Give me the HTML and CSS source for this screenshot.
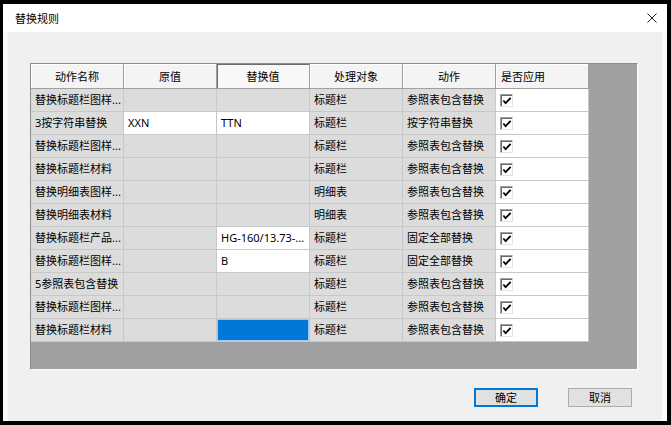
FILE: index.html
```html
<!DOCTYPE html>
<html lang="zh-CN">
  <head>
    <meta charset="UTF-8">
    <title>替换规则</title>
    <link rel="stylesheet" href="styles.css">
  </head>
  <body>
    <div class="window">
        <div class="titlebar">
            <span class="title">替换规则</span>
            <svg class="close" width="10" height="10" viewBox="0 0 10 10">
                <path d="M0.5 0.5 L9.5 9.5 M9.5 0.5 L0.5 9.5" stroke="#222" stroke-width="1" fill="none"/>
            </svg>
        </div>

        <div class="content">
            <div class="grid">
                <div class="row head">
                    <div class="th">动作名称</div>
                    <div class="th">原值</div>
                    <div class="th active">替换值</div>
                    <div class="th">处理对象</div>
                    <div class="th">动作</div>
                    <div class="th left">是否应用</div>
                </div>

                <div class="row">
                    <div class="cell">替换标题栏图样...</div>
                    <div class="cell"></div>
                    <div class="cell"></div>
                    <div class="cell">标题栏</div>
                    <div class="cell">参照表包含替换</div>
                    <div class="cell check"><span class="box"><svg width="11" height="11" viewBox="0 0 11 11"><path d="M1.5 5.5 L4 8.5 L9.5 2.5" stroke="#000" stroke-width="2" fill="none"/></svg></span></div>
                </div>
                <div class="row">
                    <div class="cell">3按字符串替换</div>
                    <div class="cell edit">XXN</div>
                    <div class="cell edit">TTN</div>
                    <div class="cell">标题栏</div>
                    <div class="cell">按字符串替换</div>
                    <div class="cell check"><span class="box"><svg width="11" height="11" viewBox="0 0 11 11"><path d="M1.5 5.5 L4 8.5 L9.5 2.5" stroke="#000" stroke-width="2" fill="none"/></svg></span></div>
                </div>
                <div class="row">
                    <div class="cell">替换标题栏图样...</div>
                    <div class="cell"></div>
                    <div class="cell"></div>
                    <div class="cell">标题栏</div>
                    <div class="cell">参照表包含替换</div>
                    <div class="cell check"><span class="box"><svg width="11" height="11" viewBox="0 0 11 11"><path d="M1.5 5.5 L4 8.5 L9.5 2.5" stroke="#000" stroke-width="2" fill="none"/></svg></span></div>
                </div>
                <div class="row">
                    <div class="cell">替换标题栏材料</div>
                    <div class="cell"></div>
                    <div class="cell"></div>
                    <div class="cell">标题栏</div>
                    <div class="cell">参照表包含替换</div>
                    <div class="cell check"><span class="box"><svg width="11" height="11" viewBox="0 0 11 11"><path d="M1.5 5.5 L4 8.5 L9.5 2.5" stroke="#000" stroke-width="2" fill="none"/></svg></span></div>
                </div>
                <div class="row">
                    <div class="cell">替换明细表图样...</div>
                    <div class="cell"></div>
                    <div class="cell"></div>
                    <div class="cell">明细表</div>
                    <div class="cell">参照表包含替换</div>
                    <div class="cell check"><span class="box"><svg width="11" height="11" viewBox="0 0 11 11"><path d="M1.5 5.5 L4 8.5 L9.5 2.5" stroke="#000" stroke-width="2" fill="none"/></svg></span></div>
                </div>
                <div class="row">
                    <div class="cell">替换明细表材料</div>
                    <div class="cell"></div>
                    <div class="cell"></div>
                    <div class="cell">明细表</div>
                    <div class="cell">参照表包含替换</div>
                    <div class="cell check"><span class="box"><svg width="11" height="11" viewBox="0 0 11 11"><path d="M1.5 5.5 L4 8.5 L9.5 2.5" stroke="#000" stroke-width="2" fill="none"/></svg></span></div>
                </div>
                <div class="row">
                    <div class="cell">替换标题栏产品...</div>
                    <div class="cell"></div>
                    <div class="cell edit">HG-160/13.73-...</div>
                    <div class="cell">标题栏</div>
                    <div class="cell">固定全部替换</div>
                    <div class="cell check"><span class="box"><svg width="11" height="11" viewBox="0 0 11 11"><path d="M1.5 5.5 L4 8.5 L9.5 2.5" stroke="#000" stroke-width="2" fill="none"/></svg></span></div>
                </div>
                <div class="row">
                    <div class="cell">替换标题栏图样...</div>
                    <div class="cell"></div>
                    <div class="cell edit">B</div>
                    <div class="cell">标题栏</div>
                    <div class="cell">固定全部替换</div>
                    <div class="cell check"><span class="box"><svg width="11" height="11" viewBox="0 0 11 11"><path d="M1.5 5.5 L4 8.5 L9.5 2.5" stroke="#000" stroke-width="2" fill="none"/></svg></span></div>
                </div>
                <div class="row">
                    <div class="cell">5参照表包含替换</div>
                    <div class="cell"></div>
                    <div class="cell"></div>
                    <div class="cell">标题栏</div>
                    <div class="cell">参照表包含替换</div>
                    <div class="cell check"><span class="box"><svg width="11" height="11" viewBox="0 0 11 11"><path d="M1.5 5.5 L4 8.5 L9.5 2.5" stroke="#000" stroke-width="2" fill="none"/></svg></span></div>
                </div>
                <div class="row">
                    <div class="cell">替换标题栏图样...</div>
                    <div class="cell"></div>
                    <div class="cell"></div>
                    <div class="cell">标题栏</div>
                    <div class="cell">参照表包含替换</div>
                    <div class="cell check"><span class="box"><svg width="11" height="11" viewBox="0 0 11 11"><path d="M1.5 5.5 L4 8.5 L9.5 2.5" stroke="#000" stroke-width="2" fill="none"/></svg></span></div>
                </div>
                <div class="row">
                    <div class="cell">替换标题栏材料</div>
                    <div class="cell"></div>
                    <div class="cell selected"></div>
                    <div class="cell">标题栏</div>
                    <div class="cell">参照表包含替换</div>
                    <div class="cell check"><span class="box"><svg width="11" height="11" viewBox="0 0 11 11"><path d="M1.5 5.5 L4 8.5 L9.5 2.5" stroke="#000" stroke-width="2" fill="none"/></svg></span></div>
                </div>
            </div>

            <div class="buttons">
                <button class="btn default">确定</button>
                <button class="btn">取消</button>
            </div>
        </div>
    </div>
  </body>
</html>
```

FILE: styles.css
```css
body {
    margin: 0;
    padding: 0;
    width: 671px;
    height: 425px;
    background: #000;
    font-family: "Noto Sans", "Noto Sans CJK SC", sans-serif;
    font-size: 11px;
    color: #000;
    overflow: hidden;
}

.window {
    margin: 4px 0 0 3px;
    width: 664px;
    height: 417px;
    background: #fbfbfb;
    display: flex;
    flex-direction: column;
}

.titlebar {
    height: 28px;
    flex: none;
    background: #fff;
    display: flex;
    align-items: center;
    padding: 0 10px 0 12px;
}

.title {
    flex: 1;
    font-size: 11px;
}

.close {
    display: block;
    margin-right: 0;
}

.content {
    flex: 1;
    margin: 0 5px;
    background: #f0f0f0;
    padding: 31px 0 0 22px;
    display: flex;
    flex-direction: column;
}

.grid {
    width: 608px;
    height: 307px;
    box-sizing: border-box;
    background: #a0a0a0;
    border: 1px solid;
    border-color: #8c8c8c #fff #fff #8c8c8c;
}

.row {
    display: grid;
    grid-template-columns: repeat(6, 93px);
    height: 23px;
}

.row.head {
    height: 25px;
}

.th {
    background: #f4f4f4;
    border-right: 1px solid #a0a0a0;
    border-bottom: 1px solid #a0a0a0;
    box-shadow: inset 1px 1px 0 #fff;
    display: flex;
    align-items: center;
    justify-content: center;
    white-space: nowrap;
}

.th.active {
    background: #f8f8f8;
    box-shadow: inset 1px 1px 0 #6e6e6e;
}

.th.left {
    justify-content: flex-start;
    padding-left: 5px;
}

.cell {
    background: #dcdcdc;
    border-right: 1px solid #c8c8c8;
    border-bottom: 1px solid #c8c8c8;
    padding-left: 4px;
    line-height: 22px;
    white-space: nowrap;
    overflow: hidden;
}

.cell.edit,
.cell.check {
    background: #fff;
}

.cell.selected {
    background: #0078d7;
    box-shadow: inset 0 0 0 1px #9fcaf0;
}

.cell.check {
    padding-left: 4px;
    display: flex;
    align-items: center;
}

.box {
    width: 13px;
    height: 13px;
    box-sizing: border-box;
    border: 1px solid;
    border-color: #a0a0a0 #e3e3e3 #e3e3e3 #a0a0a0;
    box-shadow: inset 1px 1px 0 #696969;
    background: #fff;
    display: flex;
    align-items: center;
    justify-content: center;
}

.box svg {
    display: block;
    margin: 1px 0 0 1px;
}

.buttons {
    display: flex;
    justify-content: flex-end;
    gap: 30px;
    margin-top: 18px;
    padding-right: 30px;
}

.btn {
    width: 64px;
    height: 19px;
    padding: 0;
    font-family: "Noto Sans", "Noto Sans CJK SC", sans-serif;
    font-size: 11px;
    color: #000;
    background: #e1e1e1;
    border: 1px solid #adadad;
    line-height: 17px;
}

.btn.default {
    border-color: #0078d7;
    box-shadow: inset 0 0 0 1px #0078d7;
}
```
